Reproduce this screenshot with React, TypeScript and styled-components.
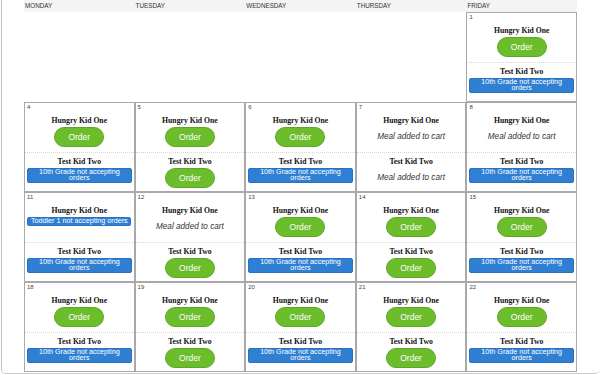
import styled, { createGlobalStyle } from 'styled-components';

type Slot =
    | { kind: 'order' }
    | { kind: 'meal' }
    | { kind: 'closed'; text: string };

interface IDay {
    day: number;
    kids: [Slot, Slot];
}

const KID_NAMES = ['Hungry Kid One', 'Test Kid Two'];
const WEEKDAYS = ['Monday', 'Tuesday', 'Wednesday', 'Thursday', 'Friday'];

const order: Slot = { kind: 'order' };
const meal: Slot = { kind: 'meal' };
const tenth: Slot = { kind: 'closed', text: '10th Grade not accepting orders' };
const toddler: Slot = { kind: 'closed', text: 'Toddler 1 not accepting orders' };

const weeks: (IDay | null)[][] = [
    [null, null, null, null, { day: 1, kids: [order, tenth] }],
    [
        { day: 4, kids: [order, tenth] },
        { day: 5, kids: [order, order] },
        { day: 6, kids: [order, tenth] },
        { day: 7, kids: [meal, meal] },
        { day: 8, kids: [meal, tenth] },
    ],
    [
        { day: 11, kids: [toddler, tenth] },
        { day: 12, kids: [meal, order] },
        { day: 13, kids: [order, tenth] },
        { day: 14, kids: [order, order] },
        { day: 15, kids: [order, tenth] },
    ],
    [
        { day: 18, kids: [order, tenth] },
        { day: 19, kids: [order, order] },
        { day: 20, kids: [order, tenth] },
        { day: 21, kids: [order, order] },
        { day: 22, kids: [order, tenth] },
    ],
];

function SlotContent({ slot }: { slot: Slot }) {
    if (slot.kind === 'order') return <OrderButton>Order</OrderButton>;
    if (slot.kind === 'meal') return <MealNote>Meal added to cart</MealNote>;
    return <Notice>{slot.text}</Notice>;
}

function Day({ data }: { data: IDay }) {
    return (
        <DayCell>
            <DayNum>{data.day}</DayNum>
            {data.kids.map((slot, i) => (
                <KidSection key={i} $first={i === 0}>
                    <KidName>{KID_NAMES[i]}</KidName>
                    <SlotContent slot={slot} />
                </KidSection>
            ))}
        </DayCell>
    );
}

export default function App() {
    return (
        <>
            <GlobalStyle />
            <Frame>
                <Calendar>
                    <HeaderRow>
                        {WEEKDAYS.map((d) => (
                            <HeaderCell key={d}>{d}</HeaderCell>
                        ))}
                    </HeaderRow>
                    {weeks.map((week, w) => (
                        <WeekRow key={w}>
                            {week.map((day, i) =>
                                day ? <Day key={i} data={day} /> : <div key={i} />
                            )}
                        </WeekRow>
                    ))}
                </Calendar>
            </Frame>
        </>
    );
}

const GlobalStyle = createGlobalStyle`
    html, body {
        margin: 0;
        padding: 0;
        background: #ffffff;
    }
`;

const Frame = styled.div`
    box-sizing: border-box;
    width: 599px;
    height: 374px;
    margin-left: 1px;
    padding-left: 22px;
    border-left: 1px solid #c4c4c4;
    border-bottom: 1px solid #cccccc;
    border-bottom-left-radius: 5px;
    border-bottom-right-radius: 5px;
    overflow: hidden;
    font-family: "Liberation Sans", Arial, sans-serif;
`;

const Calendar = styled.div`
    width: 553px;
`;

const HeaderRow = styled.div`
    display: grid;
    grid-template-columns: repeat(5, 1fr);
    height: 12px;
    background: #f4f4f4;
`;

const HeaderCell = styled.div`
    padding-left: 1px;
    font-size: 6.3px;
    line-height: 12px;
    color: #333333;
    text-transform: uppercase;
`;

const WeekRow = styled.div`
    display: grid;
    grid-template-columns: repeat(5, 1fr);
    height: 90px;
`;

const DayCell = styled.div`
    box-sizing: border-box;
    display: flex;
    flex-direction: column;
    height: 90px;
    border: 1px solid #a9a9a9;
`;

const DayNum = styled.div`
    height: 8px;
    padding: 0 2px;
    font-size: 6px;
    line-height: 9px;
    color: #444444;
`;

const KidSection = styled.div<{ $first: boolean }>`
    box-sizing: border-box;
    display: flex;
    flex-direction: column;
    align-items: center;
    padding: ${(p) => (p.$first ? '5px 2px 0' : '4px 2px 0')};
    height: ${(p) => (p.$first ? '41px' : 'auto')};
    flex: ${(p) => (p.$first ? 'none' : '1')};
    border-top: ${(p) => (p.$first ? 'none' : '1px dotted #d6d6d6')};
`;

const KidName = styled.div`
    font-family: "Liberation Serif", "Times New Roman", serif;
    font-weight: 700;
    font-size: 7.7px;
    line-height: 9px;
    color: #111111;
    margin-bottom: 1.5px;
`;

const OrderButton = styled.button`
    box-sizing: border-box;
    width: 50px;
    height: 20.5px;
    padding: 0;
    border: 1px solid #5ea724;
    border-radius: 11px;
    background: #6cbd2b;
    color: #ffffff;
    font-family: "Liberation Sans", Arial, sans-serif;
    font-size: 8.5px;
`;

const MealNote = styled.div`
    margin-top: 4px;
    font-style: italic;
    font-size: 8.2px;
    line-height: 11px;
    color: #333333;
`;

const Notice = styled.div`
    box-sizing: border-box;
    display: inline-block;
    max-width: 100%;
    padding: 0.5px 2.5px;
    border: 1px solid #2a72c0;
    border-radius: 2px;
    background: #2f80d3;
    color: #ffffff;
    font-size: 7.2px;
    line-height: 6.3px;
    text-align: center;
`;
